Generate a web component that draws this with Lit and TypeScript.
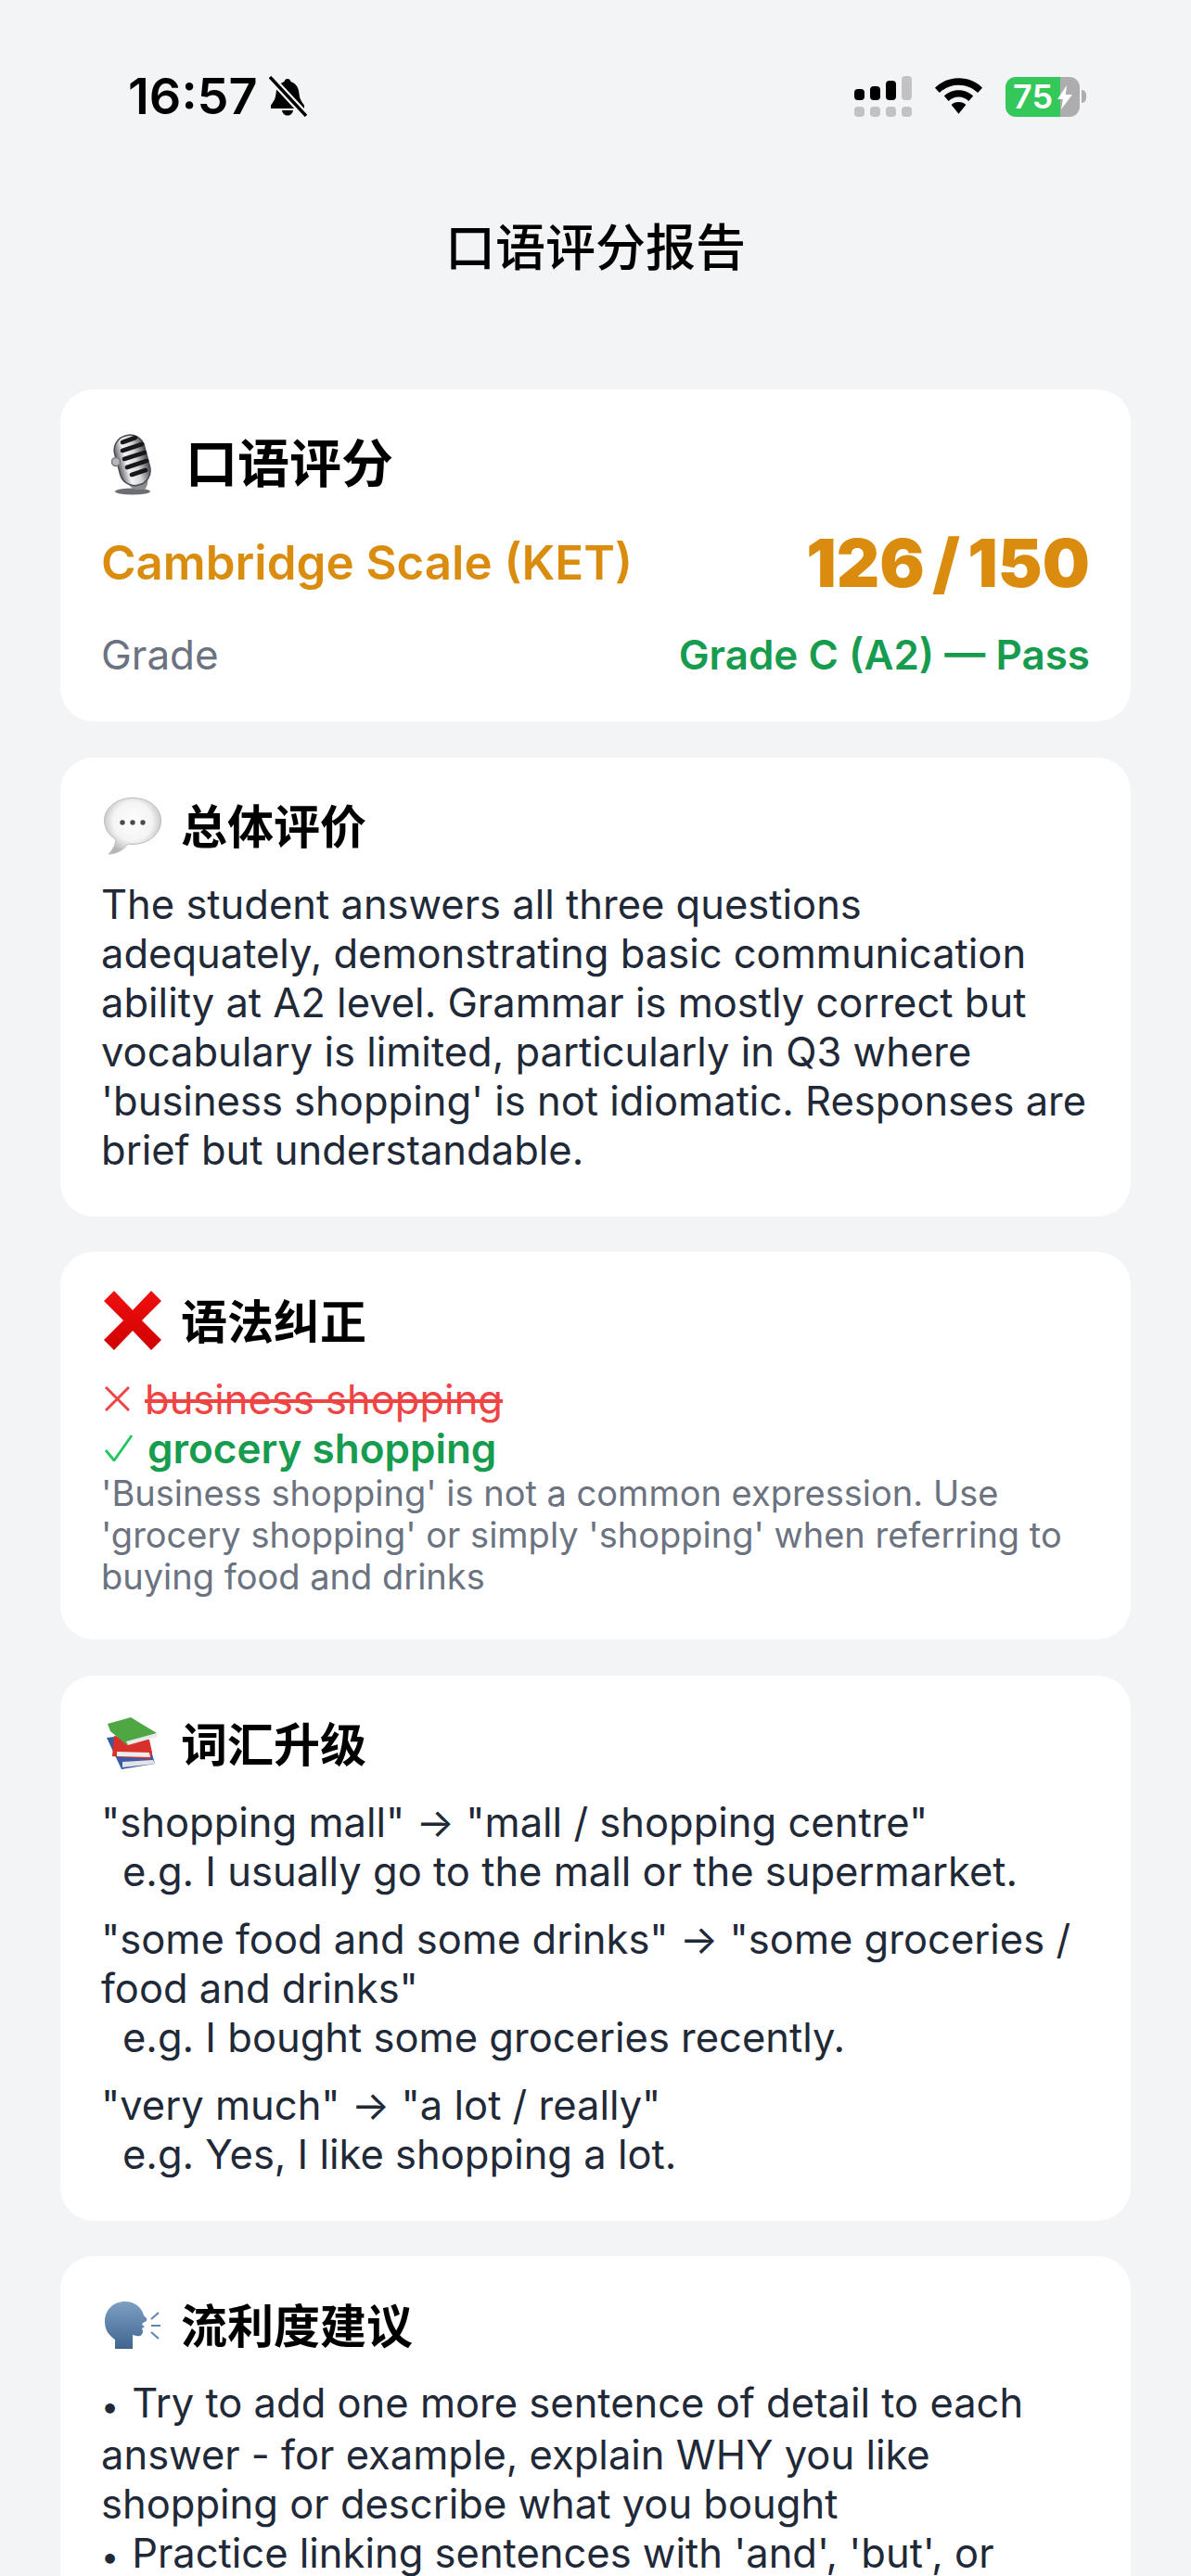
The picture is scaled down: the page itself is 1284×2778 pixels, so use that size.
import { LitElement, html, css, svg } from "lit";
import { customElement } from "lit/decorators.js";

const micIcon = svg`<svg viewBox="0 0 46 68" width="46" height="68">
  <defs><linearGradient id="chrome" x1="0" y1="0" x2="1" y2="0">
    <stop offset="0" stop-color="#5f6066"/><stop offset=".3" stop-color="#f4f4f6"/><stop offset=".62" stop-color="#d4d4d9"/><stop offset="1" stop-color="#4a4b50"/>
  </linearGradient></defs>
  <ellipse cx="23" cy="64" rx="19" ry="3.500" fill="#6d6e74"/>
  <path d="M16 50c1 6 5 10 10 12h10c3-4 4-8 3-13Z" fill="#8b8c92"/>
  <rect x="6" y="3" width="33" height="55" rx="16" fill="url(#chrome)" transform="rotate(-15 22 30)" stroke="#4a4b50" stroke-width="1.500"/>
  <g stroke="#18181a" stroke-width="4.600" stroke-linecap="round">
    <path d="M12 11 26 6"/><path d="M12 20 33 13"/><path d="M14 29 36 22"/><path d="M17 38 38 31"/><path d="M22 46 37 41"/>
  </g>
  <circle cx="5" cy="32" r="4.500" fill="#b6b7bc" stroke="#77787d" stroke-width="1.500"/>
</svg>`;

const bubbleIcon = svg`<svg viewBox="0 0 62 62" width="62" height="62">
  <defs><radialGradient id="bub" cx=".5" cy=".42" r=".58">
    <stop offset="0" stop-color="#fff"/><stop offset=".6" stop-color="#f4f4f4"/><stop offset="1" stop-color="#b4b4b4"/>
  </radialGradient></defs>
  <path d="M31 0.500C14 .5 .5 11 .5 25c0 9 5.500 16 12.500 20.500C12.500 52 9 57 5 61c8 0 16-4 21-11 2 .3 3.500 .4 5 .4 17 0 30.500-11 30.500-25.400S48 .5 31 .5Z" fill="url(#bub)" stroke="#bdbdbd" stroke-width="1"/>
  <circle cx="20" cy="27" r="2.700" fill="#4a4a4a"/><circle cx="31" cy="27" r="2.700" fill="#4a4a4a"/><circle cx="42" cy="27" r="2.700" fill="#4a4a4a"/>
</svg>`;

const crossIcon = svg`<svg viewBox="0 0 62 64" width="62" height="64">
  <defs><linearGradient id="red" x1="0" y1="0" x2="0" y2="1"><stop offset="0" stop-color="#f01010"/><stop offset="1" stop-color="#cf0000"/></linearGradient></defs>
  <path d="M0 11 11 0 31 21 51 0 62 11 41 32 62 53 51 64 31 43 11 64 0 53 21 32Z" fill="url(#red)"/>
</svg>`;

const booksIcon = svg`<svg viewBox="0 0 56 57" width="56" height="57">
  <path d="M0 22 16 56 52 50 48 36 8 21Z" fill="#3a5ca8"/>
  <path d="M17 48 50 46 52 50 17 54Z" fill="#e4e4e4"/>
  <path d="M8 20 6 42 47 45 49 38 46 24Z" fill="#d8302a"/>
  <path d="M11 37 46 38 47 43 11 42Z" fill="#ececec"/>
  <path d="M1 7 26 0 54 17 22 30 4 15Z" fill="#4fa744"/>
  <path d="M21 26 54 17 55 21 23 30Z" fill="#e9e9e9"/>
</svg>`;

const speakIcon = svg`<svg viewBox="0 0 60 52" width="60" height="52">
  <defs><linearGradient id="head" x1="0" y1="0" x2="0" y2="1"><stop offset="0" stop-color="#7d9fc4"/><stop offset="1" stop-color="#3f658f"/></linearGradient></defs>
  <path d="M22 1c11 0 18 7 20 15l3 3 0 3-4 2-1 2 3 2-3 2 1 3c0 4-3 6-7 5l-4-1v15H11V42C5 38 0 32 0 23 0 10 9 1 22 1Z" fill="url(#head)"/>
  <path d="M50 20 58 13M50 27H60M50 34 58 41" stroke="#6288b1" stroke-width="2.200" fill="none"/>
</svg>`;

const bellOff = svg`<svg viewBox="0 0 41 44" width="41" height="44">
  <path d="M20 3c2 0 3 1 3.500 3 6 2 8.500 7 9 13 .5 6 3 9 5.500 12.500V35H2v-3.500c2.500-3.500 5-6.500 5.500-12.500.5-6 3-11 9-13C17 4 18 3 20 3Z" fill="#000"/>
  <path d="M14 37h12c-.5 3.500-3 5.500-6 5.500s-5.500-2-6-5.500Z" fill="#000"/>
  <path d="M0 0 41 44" stroke="#f3f4f6" stroke-width="8"/>
  <path d="M1 1 40 43" stroke="#000" stroke-width="3.400"/>
</svg>`;

const wifiIcon = svg`<svg viewBox="0 0 54 40" width="53" height="40">
  <path d="M27 0C16.500 0 7.500 4 1 10.500l5 5.500C11.500 10.500 19 7.500 27 7.500s15.500 3 21 8.500l5-5.500C46.500 4 37.500 0 27 0Z" fill="#000"/>
  <path d="M27 13c-6.500 0-12 2.500-16 6.500l5 5.500c3-2.800 6.800-4.500 11-4.500s8 1.700 11 4.500l5-5.500c-4-4-9.500-6.500-16-6.500Z" fill="#000"/>
  <path d="M27 26c-3.300 0-6.200 1.200-8 3.200L27 39l8-9.800c-1.800-2-4.700-3.200-8-3.200Z" fill="#000"/>
</svg>`;

const wrongMark = svg`<svg class="mark" viewBox="0 0 27 27" width="27" height="27"><path d="M1 1 26 26M26 1 1 26" stroke="#ef4444" stroke-width="3" fill="none"/></svg>`;
const rightMark = svg`<svg class="mark" viewBox="0 0 30 29" width="30" height="29"><path d="M1 17 10 28 29 1" stroke="#22c55e" stroke-width="2.800" fill="none"/></svg>`;

const signalBars = [12, 15, 21];

@customElement("app-root")
export class AppRoot extends LitElement {
  static styles = css`
    :host {
      display: block;
      width: 1284px;
      height: 2778px;
      overflow: hidden;
      background: #f3f4f6;
      font-family: Inter, "Noto Sans CJK SC", sans-serif;
      color: #1f2937;
    }
    .status {
      height: 180px;
      box-sizing: border-box;
      padding: 76px 113px 0 138px;
      display: flex;
      justify-content: space-between;
      align-items: flex-start;
    }
    .status-left { display: flex; align-items: center; gap: 12px; }
    .time {
      font-size: 54px;
      line-height: 56px;
      font-weight: 600;
      color: #000;
    }
    .status-right { display: flex; align-items: center; gap: 24px; margin-top: 6px; }
    .signal { display: grid; grid-template-columns: repeat(4, 11px); gap: 7px 6px; }
    .bar { display: flex; align-items: flex-end; height: 26px; }
    .bar i { display: block; width: 11px; border-radius: 4px; background: #000; }
    .bar i.off { background: #c2c2c4; }
    .dot { height: 11px; border-radius: 4px; background: #c2c2c4; }
    .battery { display: flex; align-items: center; gap: 2px; }
    .battery-body {
      position: relative;
      width: 80px;
      height: 43px;
      border-radius: 11px;
      overflow: hidden;
      background: linear-gradient(to right, #34c759 0 74%, #adadaf 74%);
      display: flex;
      align-items: center;
      padding-left: 8px;
      box-sizing: border-box;
      color: #fff;
      font-size: 36px;
      font-weight: 600;
    }
    .battery-body svg { position: absolute; left: 56px; top: 9px; }
    .battery-tip { width: 5px; height: 14px; background: #adadaf; border-radius: 0 6px 6px 0; }
    .title {
      text-align: center;
      font-size: 54px;
      line-height: 76px;
      font-weight: 500;
      color: #000;
      height: 240px;
      box-sizing: border-box;
      padding-top: 50px;
      margin: 0;
    }
    main { display: flex; flex-direction: column; gap: 38.5px; padding: 0 65px; }
    .card {
      background: #fff;
      border-radius: 36px;
      padding: 38px 44px 45px;
    }
    .card.score-card { padding-bottom: 42px; }
    .card.cut { padding-bottom: 120px; }
    .head {
      display: flex;
      align-items: center;
      gap: 18px;
      height: 72px;
      font-size: 50px;
      font-weight: 700;
      color: #000;
      margin: 0 0 22px;
    }
    .head span:last-child { margin-bottom: 5px; }
    .head.big { font-size: 56px; gap: 23px; margin: 6px 0 29px; }
    .head.big span:last-child { margin-bottom: 10px; }
    .emoji { flex: none; width: 68px; display: flex; justify-content: center; }
    .row { display: flex; justify-content: space-between; align-items: center; }
    .scale { color: #d98c0d; font-size: 51px; font-weight: 600; line-height: 84px; }
    .score { color: #d98c0d; font-size: 72px; font-weight: 900; line-height: 84px; word-spacing: -6px; }
    .grade { color: #6b7280; font-size: 44px; line-height: 60px; margin-top: 27px; }
    .pass { color: #179b4e; font-weight: 600; }
    p { margin: 0; font-size: 43.5px; line-height: 53px; }
    .wrong, .right {
      display: flex;
      align-items: center;
      height: 53px;
      padding-left: 4px;
    }
    .wrong { color: #ef4444; font-size: 43.5px; gap: 16px; }
    .wrong s { text-decoration: line-through; }
    .right { color: #179b4e; font-weight: 600; font-size: 44px; gap: 16px; }
    .mark { flex: none; }
    .note { color: #6b7280; font-size: 38px; line-height: 45px; }
    .vocab { display: flex; flex-direction: column; gap: 20px; }
    .indent { padding-left: 23px; display: block; }
    .bullet { font-size: 34px; margin-right: 14px; }
  `;

  render() {
    return html`
      <div class="status">
        <div class="status-left"><span class="time">16:57</span>${bellOff}</div>
        <div class="status-right">
          <div class="signal">
            ${signalBars.map((h) => html`<div class="bar"><i style="height:${h}px"></i></div>`)}
            <div class="bar"><i class="off" style="height:26px"></i></div>
            <div class="dot"></div><div class="dot"></div><div class="dot"></div><div class="dot"></div>
          </div>
          ${wifiIcon}
          <div class="battery">
            <div class="battery-body">75
              <svg viewBox="0 0 16 26" width="16" height="26"><path d="M10 0 0 15h6l-2 11L16 10H9Z" fill="#fff"/></svg>
            </div>
            <div class="battery-tip"></div>
          </div>
        </div>
      </div>
      <h1 class="title">口语评分报告</h1>
      <main>
        <section class="card score-card">
          <div class="head big"><span class="emoji">${micIcon}</span><span>口语评分</span></div>
          <div class="row"><span class="scale">Cambridge Scale (KET)</span><span class="score">126 / 150</span></div>
          <div class="row grade"><span>Grade</span><span class="pass">Grade C (A2) — Pass</span></div>
        </section>
        <section class="card">
          <div class="head"><span class="emoji">${bubbleIcon}</span><span>总体评价</span></div>
          <p>The student answers all three questions adequately, demonstrating basic communication ability at A2 level. Grammar is mostly correct but vocabulary is limited, particularly in Q3 where 'business shopping' is not idiomatic. Responses are brief but understandable.</p>
        </section>
        <section class="card">
          <div class="head"><span class="emoji">${crossIcon}</span><span>语法纠正</span></div>
          <div class="wrong">${wrongMark}<s>business shopping</s></div>
          <div class="right">${rightMark}<span>grocery shopping</span></div>
          <div class="note">'Business shopping' is not a common expression. Use 'grocery shopping' or simply 'shopping' when referring to buying food and drinks</div>
        </section>
        <section class="card">
          <div class="head"><span class="emoji">${booksIcon}</span><span>词汇升级</span></div>
          <div class="vocab">
            <p>"shopping mall" → "mall / shopping centre"<span class="indent">e.g. I usually go to the mall or the supermarket.</span></p>
            <p>"some food and some drinks" → "some groceries / food and drinks"<span class="indent">e.g. I bought some groceries recently.</span></p>
            <p>"very much" → "a lot / really"<span class="indent">e.g. Yes, I like shopping a lot.</span></p>
          </div>
        </section>
        <section class="card cut">
          <div class="head"><span class="emoji">${speakIcon}</span><span>流利度建议</span></div>
          <p><span class="bullet">•</span>Try to add one more sentence of detail to each answer - for example, explain WHY you like shopping or describe what you bought<br><span class="bullet">•</span>Practice linking sentences with 'and', 'but', or</p>
        </section>
      </main>
    `;
  }
}
